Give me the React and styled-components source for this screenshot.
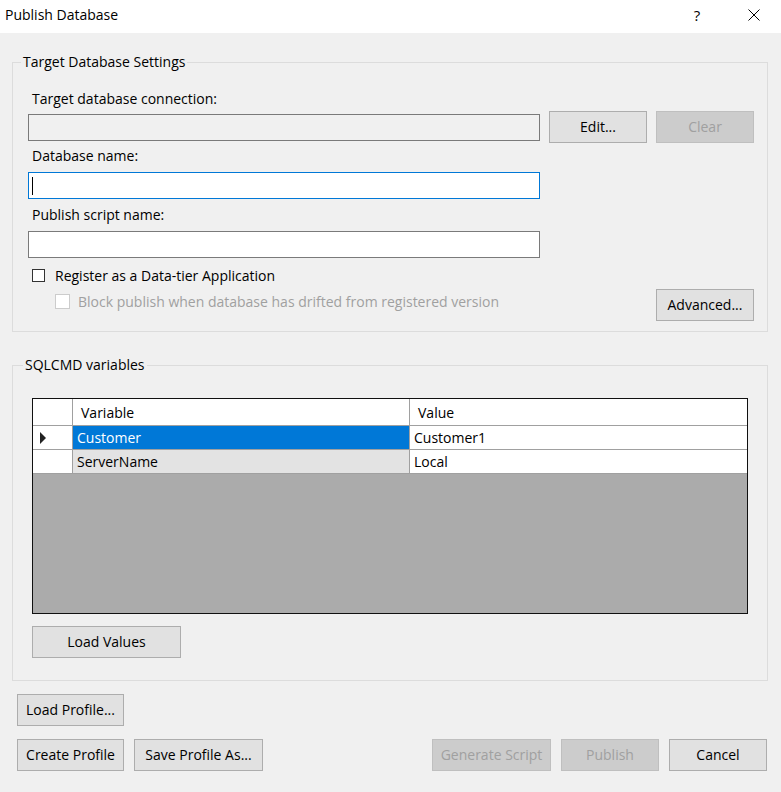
import React from 'react';
import styled, { createGlobalStyle, css } from 'styled-components';

const GlobalStyle = createGlobalStyle`
  html, body {
    margin: 0;
    padding: 0;
    background: #f0f0f0;
  }
  body {
    font-family: "Open Sans", "Noto Sans", sans-serif;
    font-size: 14px;
    color: #000;
  }
  * {
    box-sizing: border-box;
  }
`;

const Window = styled.div`
  width: 781px;
  height: 792px;
  background: #f0f0f0;
  display: flex;
  flex-direction: column;
  overflow: hidden;
`;

const TitleBar = styled.div`
  height: 33px;
  background: #fff;
  display: flex;
  align-items: center;
  padding-left: 5px;
  padding-right: 4px;
`;

const TitleText = styled.div`
  flex: 1;
  font-size: 14px;
  line-height: 20px;
  margin-top: -3px;
`;

const TitleButton = styled.div`
  width: 46px;
  height: 33px;
  display: flex;
  align-items: center;
  justify-content: center;
  font-size: 15px;
  margin-top: -3px;
  margin-right: ${p => p.$right || 0}px;
`;

const Body = styled.div`
  padding: 19px 13px 0 12px;
  display: flex;
  flex-direction: column;
`;

const Group = styled.fieldset`
  margin: 0;
  border: 1px solid #dcdcdc;
  padding: ${p => p.$pad};
  min-width: 0;
  display: flex;
  flex-direction: column;
  & + & {
    margin-top: 23px;
  }
`;

const Legend = styled.legend`
  padding: 0 2px;
  margin-left: ${p => p.$offset};
  line-height: 20px;
  height: 20px;
`;

const Label = styled.div`
  line-height: 20px;
  margin-top: ${p => p.$top || 0}px;
  padding-left: 4px;
`;

const Row = styled.div`
  display: flex;
  align-items: ${p => p.$align || 'center'};
  gap: ${p => p.$gap || 10}px;
  margin-top: ${p => p.$top || 0}px;
`;

const TextBox = styled.div`
  width: 512px;
  height: 27px;
  border: 1px solid ${p => (p.$focused ? '#0078d7' : '#7a7a7a')};
  background: ${p => (p.$readonly ? '#f0f0f0' : '#fff')};
  margin-top: ${p => p.$top || 0}px;
  display: flex;
  align-items: center;
  padding-left: 3px;
`;

const Caret = styled.span`
  width: 1px;
  height: 18px;
  background: #000;
`;

const Button = styled.div`
  width: ${p => p.$w}px;
  height: 32px;
  flex: none;
  display: flex;
  align-items: center;
  justify-content: center;
  background: #e1e1e1;
  border: 1px solid #adadad;
  line-height: 20px;
  white-space: nowrap;
  ${p => p.$disabled && css`
    background: #cccccc;
    border-color: #bfbfbf;
    color: #a0a0a0;
  `}
`;

const CheckRow = styled.div`
  display: flex;
  align-items: center;
  gap: ${p => p.$gap}px;
  height: 20px;
  padding-left: ${p => p.$indent}px;
  margin-top: ${p => p.$top || 0}px;
  color: ${p => (p.$disabled ? '#a0a0a0' : '#000')};
`;

const CheckBox = styled.span`
  width: ${p => (p.$disabled ? 15 : 13)}px;
  height: ${p => (p.$disabled ? 15 : 13)}px;
  flex: none;
  background: #fff;
  border: 1px solid ${p => (p.$disabled ? '#cccccc' : '#333')};
`;

const CheckColumn = styled.div`
  flex: 1;
  display: flex;
  flex-direction: column;
  padding-bottom: 10px;
`;

const Grid = styled.div`
  height: 216px;
  border: 1px solid #101010;
  background: #ababab;
  display: flex;
  flex-direction: column;
`;

const GridRow = styled.div`
  display: grid;
  grid-template-columns: 40px 337px 1fr;
  height: ${p => p.$h}px;
  border-bottom: 1px solid #a0a0a0;
`;

const Cell = styled.div`
  display: flex;
  align-items: center;
  padding-left: ${p => p.$pad || 4}px;
  background: ${p => p.$bg || '#fff'};
  color: ${p => p.$color || '#000'};
  border-right: ${p => (p.$last ? 'none' : '1px solid #a0a0a0')};
  white-space: nowrap;
  overflow: hidden;
`;

const Arrow = styled.span`
  width: 0;
  height: 0;
  margin-left: 3px;
  border-top: 6px solid transparent;
  border-bottom: 6px solid transparent;
  border-left: 6px solid #222;
`;

const Footer = styled.div`
  padding: 13px 14px 0 17px;
  display: flex;
  flex-direction: column;
  gap: 13px;
`;

const Spacer = styled.div`
  flex: 1;
`;

const rows = [
  { name: 'Customer', value: 'Customer1', selected: true },
  { name: 'ServerName', value: 'Local', selected: false }
];

const CloseIcon = () => (
  <svg width="12" height="12" viewBox="0 0 12 12">
    <path d="M0.5 0.5 L11.5 11.5 M11.5 0.5 L0.5 11.5" stroke="#000" strokeWidth="1" fill="none" />
  </svg>
);

export default function App() {
  return (
    <Window>
      <GlobalStyle />
      <TitleBar>
        <TitleText>Publish Database</TitleText>
        <TitleButton $right={11}>?</TitleButton>
        <TitleButton><CloseIcon /></TitleButton>
      </TitleBar>
      <Body>
        <Group $pad="0 13px 10px 15px">
          <Legend $offset="-7px">Target Database Settings</Legend>
          <Label $top={17}>Target database connection:</Label>
          <Row $top={2} $gap={9}>
            <TextBox $readonly />
            <Button $w={98}>Edit...</Button>
            <Button $w={98} $disabled>Clear</Button>
          </Row>
          <Label $top={3}>Database name:</Label>
          <TextBox $focused $top={6}><Caret /></TextBox>
          <Label $top={6}>Publish script name:</Label>
          <TextBox $top={6} />
          <Row $top={0} $align="flex-end">
            <CheckColumn>
              <CheckRow $indent={4} $gap={10} $top={7}>
                <CheckBox />
                Register as a Data-tier Application
              </CheckRow>
              <CheckRow $indent={27} $gap={8} $top={6} $disabled>
                <CheckBox $disabled />
                Block publish when database has drifted from registered version
              </CheckRow>
            </CheckColumn>
            <Button $w={98}>Advanced...</Button>
          </Row>
        </Group>
        <Group $pad="23px 19px 22px 19px">
          <Legend $offset="-9px">SQLCMD variables</Legend>
          <Grid>
            <GridRow $h={27}>
              <Cell />
              <Cell $pad={8}>Variable</Cell>
              <Cell $pad={8} $last>Value</Cell>
            </GridRow>
            {rows.map(r => (
              <GridRow key={r.name} $h={24}>
                <Cell>{r.selected && <Arrow />}</Cell>
                <Cell
                  $bg={r.selected ? '#0078d7' : '#e3e3e3'}
                  $color={r.selected ? '#fff' : '#000'}
                >
                  {r.name}
                </Cell>
                <Cell $last>{r.value}</Cell>
              </GridRow>
            ))}
          </Grid>
          <Row $top={12}>
            <Button $w={149}>Load Values</Button>
          </Row>
        </Group>
      </Body>
      <Footer>
        <Row>
          <Button $w={107}>Load Profile...</Button>
        </Row>
        <Row>
          <Button $w={107}>Create Profile</Button>
          <Button $w={129}>Save Profile As...</Button>
          <Spacer />
          <Button $w={119} $disabled>Generate Script</Button>
          <Button $w={98} $disabled>Publish</Button>
          <Button $w={98}>Cancel</Button>
        </Row>
      </Footer>
    </Window>
  );
}
